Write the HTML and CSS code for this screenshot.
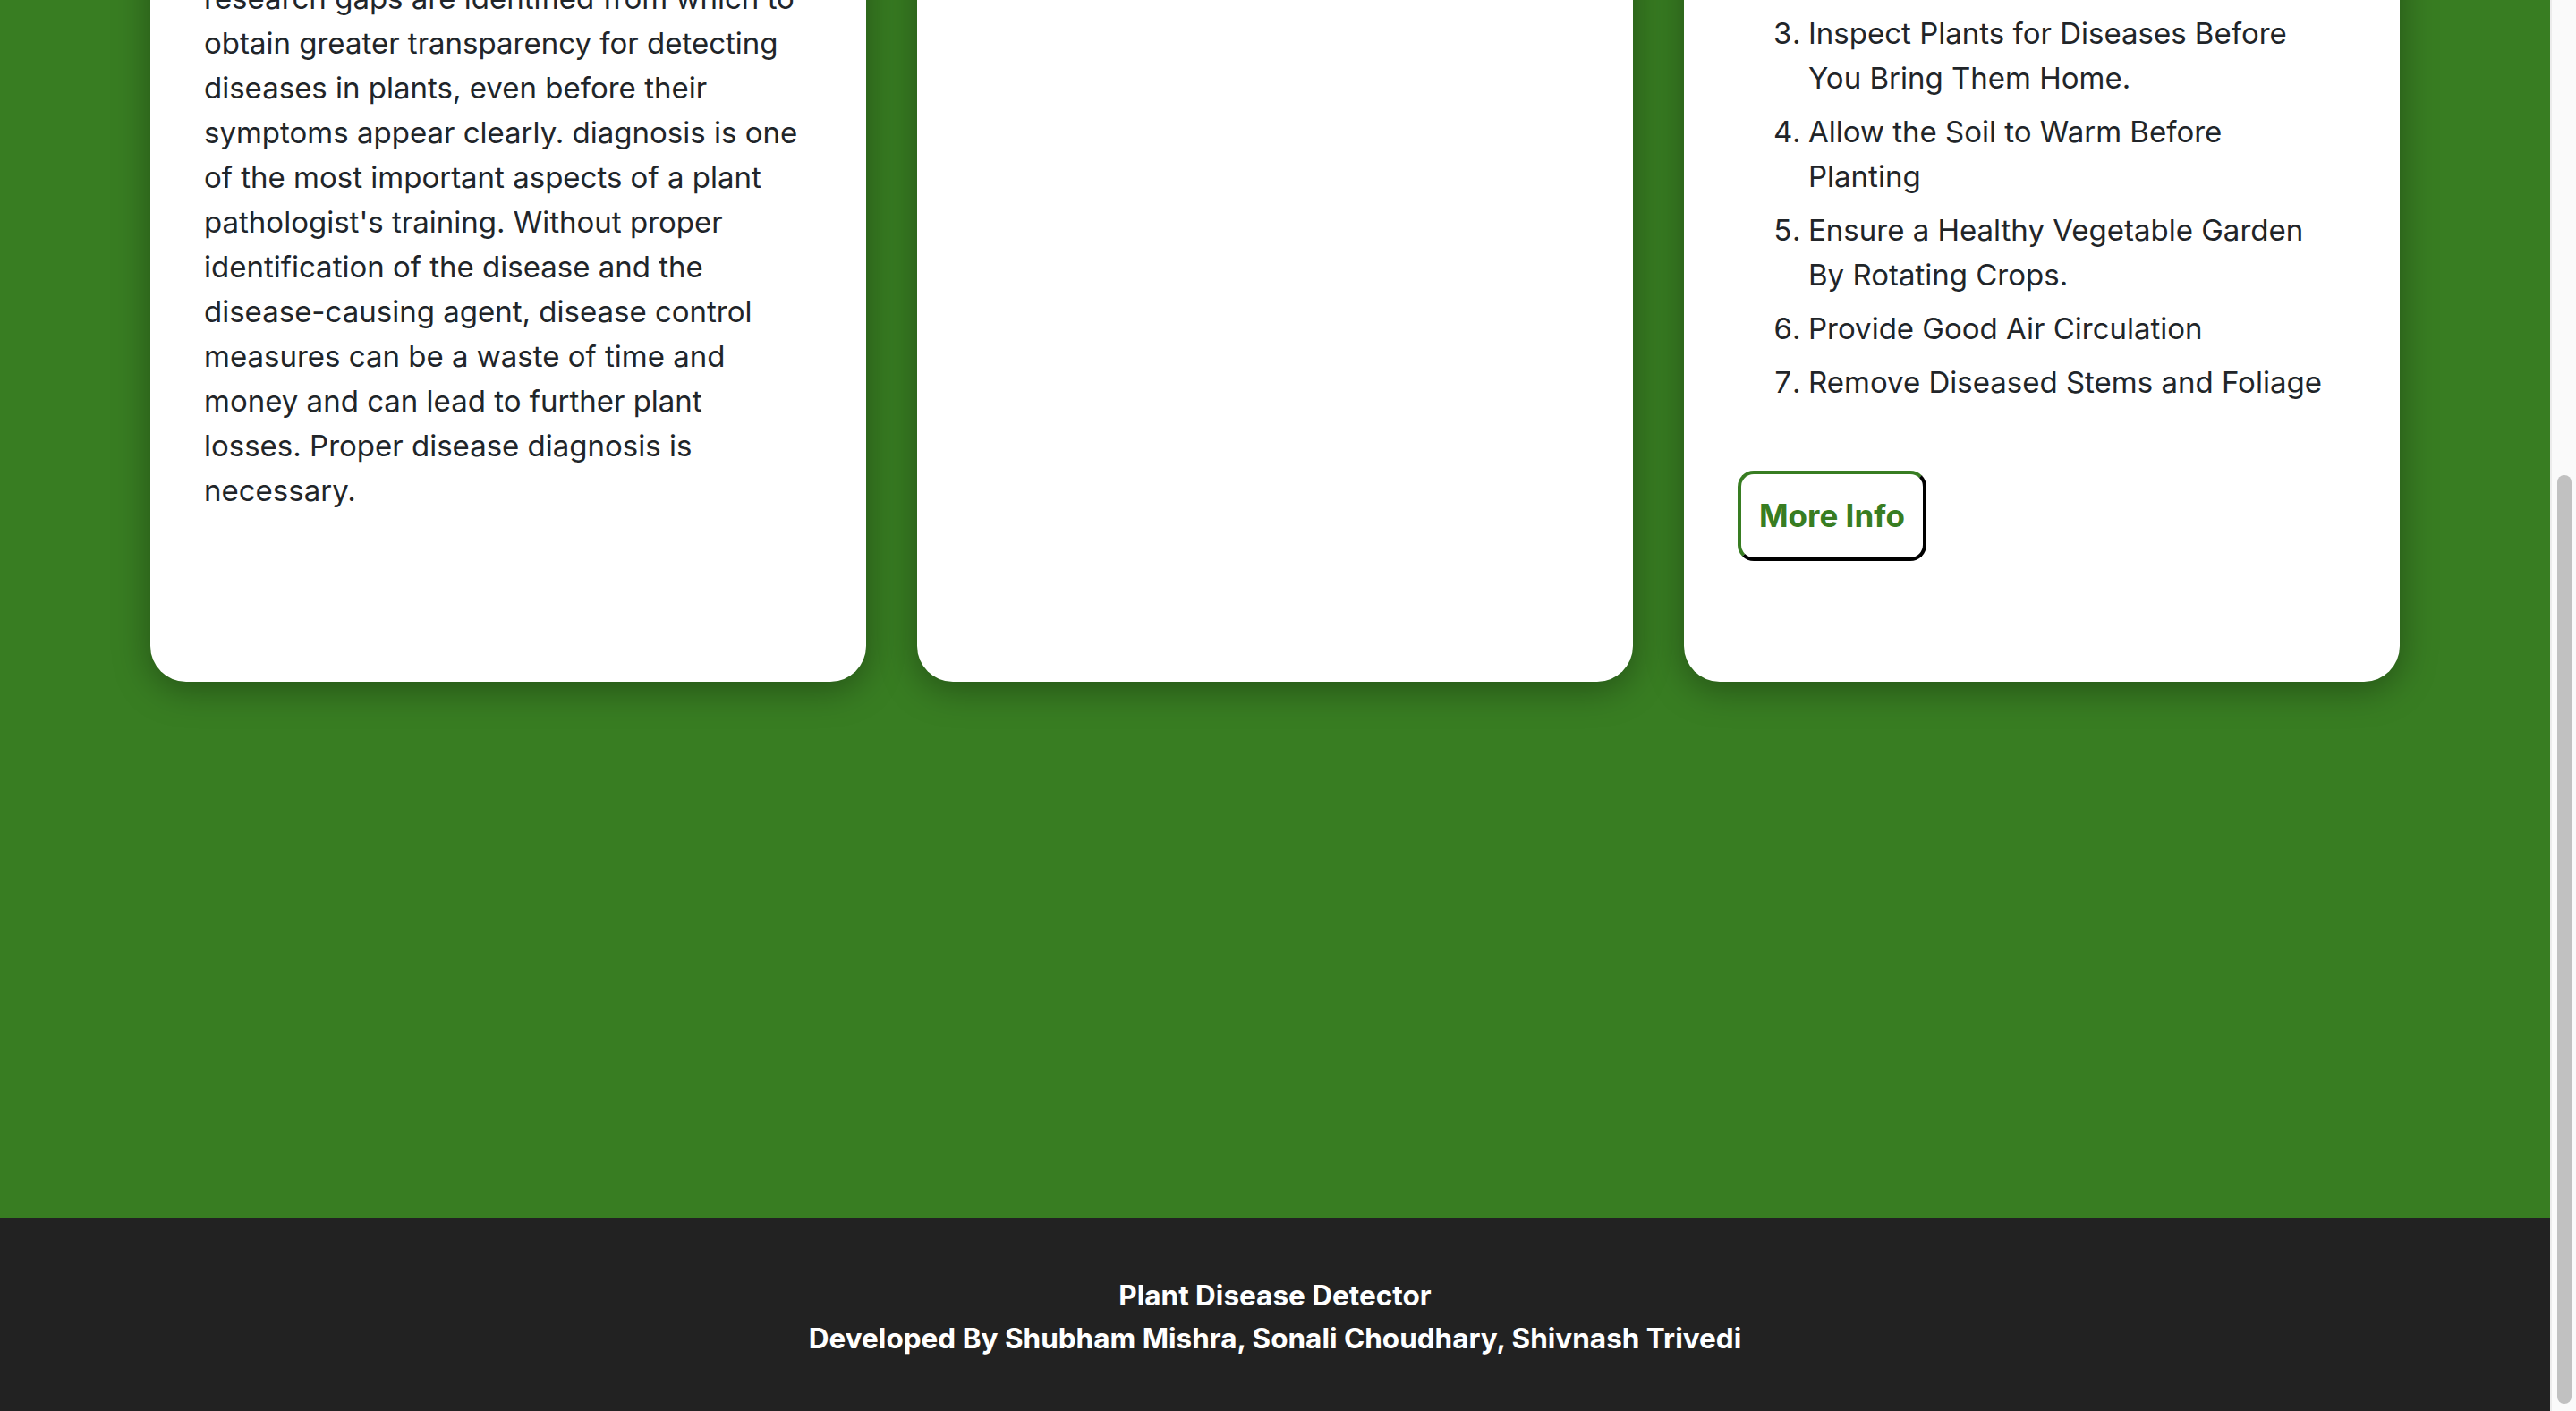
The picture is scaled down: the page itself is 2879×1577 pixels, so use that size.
FILE: index.html
```html
<!DOCTYPE html>
<html lang="en">
<head>
<meta charset="utf-8">
<title>Plant Disease Detector</title>
<link rel="stylesheet" href="styles.css">
</head>
<body>
<div class="window">
  <div class="page">
    <main class="content">
      <section class="cards">
        <article class="card">
          <h2 class="card-title">About Plant Diseases</h2>
          <p class="card-text">Plant diseases affect the growth of their respective species, therefore their early identification is very important. Many Machine Learning models have been employed for the detection and classification of plant diseases but, after the advancements in Deep Learning, this area of research appears to have great potential in terms of increased accuracy. This review provides a comprehensive explanation of DL models used to visualize various plant diseases. In addition, some</p>
          <p class="card-text card-text--about">research gaps are identified from which to obtain greater transparency for detecting diseases in plants, even before their symptoms appear clearly. diagnosis is one of the most important aspects of a plant pathologist's training. Without proper identification of the disease and the disease-causing agent, disease control measures can be a waste of time and money and can lead to further plant losses. Proper disease diagnosis is necessary.</p>
        </article>
        <article class="card">
          <h2 class="card-title">Upload Leaf Image</h2>
          <div class="upload-box"></div>
        </article>
        <article class="card">
          <h2 class="card-title">Prevent Plant Disease</h2>
          <ol class="tips">
            <li>Choose Disease-Resistant Plant Varieties.</li>
            <li>Water Plants Properly and Avoid Wet Foliage.</li>
            <li>Inspect Plants for Diseases Before You Bring Them Home.</li>
            <li>Allow the Soil to Warm Before Planting</li>
            <li>Ensure a Healthy Vegetable Garden By Rotating Crops.</li>
            <li>Provide Good Air Circulation</li>
            <li>Remove Diseased Stems and Foliage</li>
          </ol>
          <div class="card-actions">
            <button class="btn-more" type="button">More Info</button>
          </div>
        </article>
      </section>
    </main>
    <footer class="footer">
      <p class="footer-line">Plant Disease Detector</p>
      <p class="footer-line">Developed By Shubham Mishra, Sonali Choudhary, Shivnash Trivedi</p>
    </footer>
  </div>
  <div class="scrollbar">
    <div class="scrollbar-thumb"></div>
  </div>
</div>
</body>
</html>
```

FILE: styles.css
```css
* {
  box-sizing: border-box;
}

html, body {
  margin: 0;
  padding: 0;
  height: 1577px;
  overflow: hidden;
}

body {
  font-family: Inter, "Noto Sans", "Liberation Sans", sans-serif;
  color: #212529;
}

.window {
  display: flex;
  height: 1577px;
}

.page {
  flex: 1;
  display: flex;
  flex-direction: column;
  min-width: 0;
}

.content {
  flex: 1;
  background: #387d22;
  overflow: hidden;
  display: flex;
  flex-direction: column;
  justify-content: flex-end;
  padding-bottom: 599px;
}

.cards {
  display: grid;
  grid-template-columns: repeat(3, 800px);
  column-gap: 57px;
  padding-left: 168px;
  align-items: stretch;
}

.card {
  background: #ffffff;
  border-radius: 40px;
  box-shadow: 0 8px 40px rgba(0, 0, 0, 0.35);
  padding: 60px 70px 60px 60px;
  display: flex;
  flex-direction: column;
  justify-content: flex-end;
}

.card-title {
  margin: 0 0 30px;
  font-size: 48px;
  font-weight: 700;
}

.card-text {
  margin: 0;
  font-size: 33px;
  line-height: 50px;
}

.card-text--about {
  margin-bottom: 129px;
}

.upload-box {
  height: 500px;
  margin-bottom: 900px;
  border-radius: 20px;
  background: #eef3ec;
}

.tips {
  margin: 0 0 64px;
  padding-left: 79px;
  font-size: 33px;
  line-height: 50px;
}

.tips li {
  margin-bottom: 10px;
}

.card-actions {
  display: flex;
  margin-bottom: 75px;
}

.btn-more {
  font-family: Inter, "Noto Sans", "Liberation Sans", sans-serif;
  font-size: 35px;
  font-weight: 700;
  line-height: 43px;
  color: #387d22;
  background: #ffffff;
  border: 4px outset #387d22;
  border-right-color: #112b07;
  border-bottom-color: #112b07;
  border-radius: 18px;
  padding: 25px 20px;
  cursor: pointer;
}

.footer {
  background: #222222;
  color: #ffffff;
  padding: 63px 0 57px;
  text-align: center;
}

.footer-line {
  margin: 0;
  font-size: 31.5px;
  line-height: 48px;
  font-weight: 700;
}

.scrollbar {
  width: 29px;
  flex: none;
  background: #fafafa;
  border-left: 2px solid #ececec;
  display: flex;
  flex-direction: column;
  padding: 531px 5px 8px 6px;
}

.scrollbar-thumb {
  flex: 1;
  background: #c1c1c1;
  border-radius: 8px;
}
```
